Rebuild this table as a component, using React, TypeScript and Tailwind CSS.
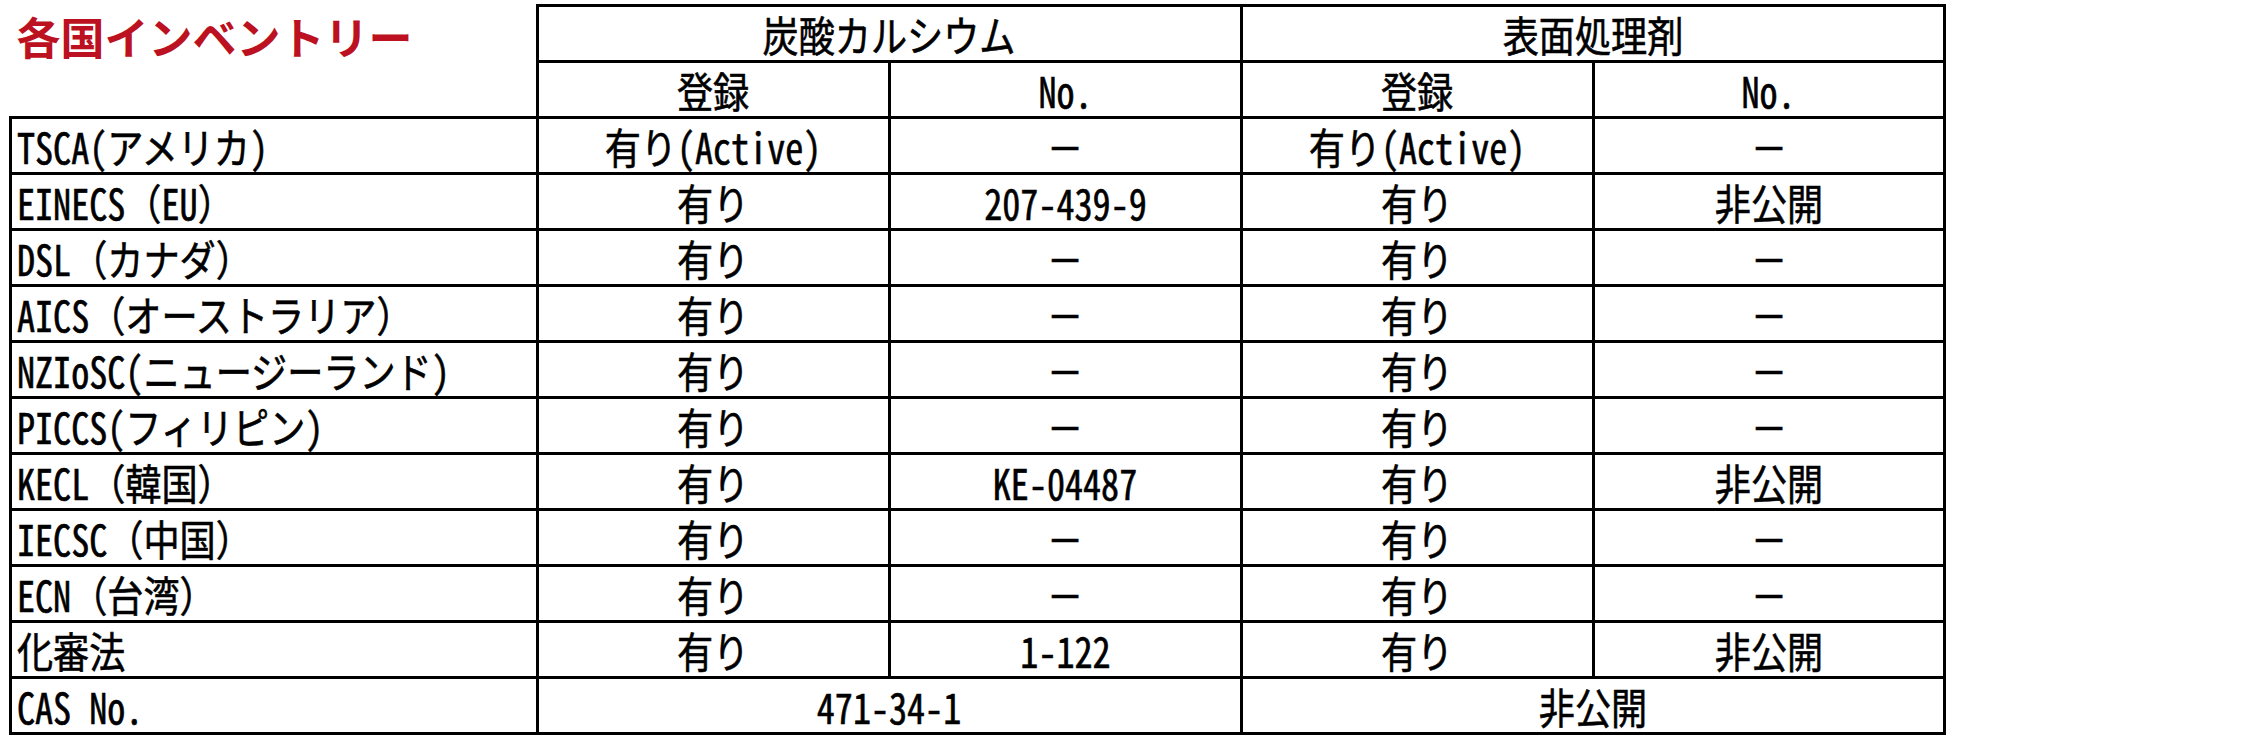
import React from 'react';

type Row = [string, string, string, string, string];

const rows: Row[] = [
  ['TSCA(アメリカ)', '有り(Active)', '－', '有り(Active)', '－'],
  ['EINECS（EU）', '有り', '207-439-9', '有り', '非公開'],
  ['DSL（カナダ）', '有り', '－', '有り', '－'],
  ['AICS（オーストラリア）', '有り', '－', '有り', '－'],
  ['NZIoSC(ニュージーランド)', '有り', '－', '有り', '－'],
  ['PICCS(フィリピン)', '有り', '－', '有り', '－'],
  ['KECL（韓国）', '有り', 'KE-04487', '有り', '非公開'],
  ['IECSC（中国）', '有り', '－', '有り', '－'],
  ['ECN（台湾）', '有り', '－', '有り', '－'],
  ['化審法', '有り', '1-122', '有り', '非公開'],
];

const cell = 'h-[56px] border-[3px] border-black p-0 text-center align-middle font-normal';

// ascii runs get the half-width forms, everything else stays full width
function parts(s: string): React.ReactNode[] {
  return s.split(/([\x20-\x7e]+)/).map((p, i) =>
    /^[\x20-\x7e]+$/.test(p) ? (
      <span key={i} className="[font-feature-settings:'hwid']">
        {p}
      </span>
    ) : (
      p
    )
  );
}

function Txt({ text, left = false }: { text: string; left?: boolean }): React.ReactElement {
  return (
    <span
      className={
        left
          ? 'inline-block origin-left scale-x-[0.86] whitespace-pre [-webkit-text-stroke:0.6px_#000]'
          : 'inline-block origin-center scale-x-[0.86] whitespace-pre [-webkit-text-stroke:0.6px_#000]'
      }
    >
      {parts(text)}
    </span>
  );
}

export default function App(): React.ReactElement {
  return (
    <div className="h-[736px] w-[2254px] bg-white pl-[9px] pt-[4px] font-['Noto_Sans_CJK_JP',sans-serif] text-black">
      <table className="table-fixed border-collapse text-[42px] leading-none">
        <colgroup>
          <col className="w-[527px]" />
          <col className="w-[352px]" />
          <col className="w-[352px]" />
          <col className="w-[352px]" />
          <col className="w-[351px]" />
        </colgroup>
        <thead>
          <tr>
            <th
              rowSpan={2}
              className="border-t-0 border-l-0 border-r-[3px] border-b-[3px] border-black p-0 pl-[6px] pt-[8px] text-left align-top"
            >
              <span className="text-[44px] font-bold text-[#bc1120]">各国インベントリー</span>
            </th>
            <th colSpan={2} className={cell}>
              <Txt text="炭酸カルシウム" />
            </th>
            <th colSpan={2} className={cell}>
              <Txt text="表面処理剤" />
            </th>
          </tr>
          <tr>
            <th className={cell}>
              <Txt text="登録" />
            </th>
            <th className={cell}>
              <Txt text="No." />
            </th>
            <th className={cell}>
              <Txt text="登録" />
            </th>
            <th className={cell}>
              <Txt text="No." />
            </th>
          </tr>
        </thead>
        <tbody>
          {rows.map((r) => (
            <tr key={r[0]}>
              <td className={cell + ' pl-[5px] text-left'}>
                <Txt text={r[0]} left />
              </td>
              <td className={cell}>
                <Txt text={r[1]} />
              </td>
              <td className={cell}>
                <Txt text={r[2]} />
              </td>
              <td className={cell}>
                <Txt text={r[3]} />
              </td>
              <td className={cell}>
                <Txt text={r[4]} />
              </td>
            </tr>
          ))}
          <tr>
            <td className={cell + ' pl-[5px] text-left'}>
              <Txt text="CAS No." left />
            </td>
            <td colSpan={2} className={cell}>
              <Txt text="471-34-1" />
            </td>
            <td colSpan={2} className={cell}>
              <Txt text="非公開" />
            </td>
          </tr>
        </tbody>
      </table>
    </div>
  );
}
